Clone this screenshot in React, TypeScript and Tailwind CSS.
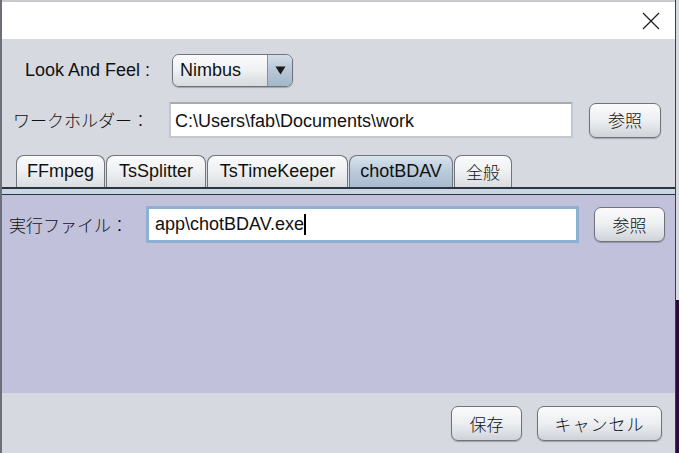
import { ReactNode } from 'react'

const latin = "font-['Liberation_Sans',Arial,sans-serif]"
const cjk = "font-['Noto_Sans_CJK_JP','Liberation_Sans',sans-serif] font-light"

const NimbusButton = ({ children, className }: { children: ReactNode; className: string }) => (
  <button
    className={`${className} ${cjk} flex items-center justify-center rounded-[7px] border border-[#6e737c] bg-gradient-to-b from-[#fbfbfc] via-[#eceef1] to-[#cfd3d9] text-[17px] text-[#111] shadow-[0_1px_1px_rgba(0,0,0,0.25)]`}
  >
    {children}
  </button>
)

const Tab = ({ label, width, selected, jp }: { label: string; width: string; selected?: boolean; jp?: boolean }) => (
  <div
    className={`${width} h-[32px] flex items-center justify-center rounded-t-[8px] border border-b-0 border-[#6f747d] text-[#111] ${
      jp ? `${cjk} text-[17px]` : `${latin} text-[18px]`
    } ${
      selected
        ? 'bg-gradient-to-b from-[#d9e4ee] via-[#b9cadb] to-[#a8bccf]'
        : 'bg-gradient-to-b from-[#fbfbfc] via-[#eef0f2] to-[#d9dce1]'
    }`}
  >
    {label}
  </div>
)

export default function App() {
  return (
    <div className="w-[679px] h-[453px] flex bg-[#d6d9df] overflow-hidden">
      <div className="w-[676px] h-[453px] flex flex-col border-l-2 border-r border-l-[#6b7078] border-r-[#3c3f46]">
        {/* title bar */}
        <div className="h-[39px] shrink-0 bg-white border-t-2 border-[#c9cacd] flex justify-end items-center pr-[15px]">
          <svg width="18" height="18" viewBox="0 0 18 18" className="mt-[1px]">
            <path d="M1 1 L17 17 M17 1 L1 17" stroke="#222" strokeWidth="1.3" fill="none" />
          </svg>
        </div>

        {/* top settings */}
        <div className="bg-[#d6d9df] shrink-0">
          <div className="flex items-center pt-[15px] pl-[23px]">
            <span className={`${latin} w-[147px] text-[18px] text-[#111]`}>Look And Feel :</span>
            <div className="w-[121px] h-[33px] flex rounded-[7px] border border-[#6e737c] overflow-hidden shadow-[0_1px_1px_rgba(0,0,0,0.25)]">
              <div className={`${latin} flex-1 flex items-center pl-[7px] text-[18px] text-[#111] bg-gradient-to-b from-[#fbfbfc] via-[#eef0f2] to-[#d6d9de]`}>
                Nimbus
              </div>
              <div className="w-[25px] flex items-center justify-center border-l border-[#8a9099] bg-gradient-to-b from-[#d3dee8] via-[#b6c7d7] to-[#a3b7ca]">
                <svg width="11" height="9" viewBox="0 0 11 9">
                  <path d="M0.5 0.5 L10.5 0.5 L5.5 8.5 Z" fill="#1a1a1a" />
                </svg>
              </div>
            </div>
          </div>

          <div className="flex items-center mt-[15px] pl-[11px]">
            <span className={`${cjk} w-[156px] text-[17px] text-[#111]`}>ワークホルダー：</span>
            <div className="w-[404px] h-[36px] flex items-center border-2 border-[#c4c7cc] border-t-[#a7abb1] bg-white pl-[4px] pt-[2px]">
              <span className={`${latin} text-[18px] text-[#111]`}>C:\Users\fab\Documents\work</span>
            </div>
            <NimbusButton className="ml-[16px] w-[72px] h-[35px]">参照</NimbusButton>
          </div>

          <div className="flex gap-[1px] mt-[17px] pl-[14px]">
            <Tab label="FFmpeg" width="w-[89px]" />
            <Tab label="TsSplitter" width="w-[100px]" />
            <Tab label="TsTimeKeeper" width="w-[141px]" />
            <Tab label="chotBDAV" width="w-[104px]" selected />
            <Tab label="全般" width="w-[58px]" jp />
          </div>
        </div>

        {/* tab separator */}
        <div className="h-[2px] bg-[#2f333b] shrink-0" />
        <div className="h-[5px] bg-[#c8d6e5] shrink-0" />
        <div className="h-[1px] bg-[#2f333b] shrink-0" />

        {/* tab content */}
        <div className="h-[198px] shrink-0 bg-[#c1c1dc] pt-[11px]">
          <div className="flex items-center pl-[7px]">
            <span className={`${cjk} w-[137px] text-[17px] text-[#111]`}>実行ファイル：</span>
            <div className="w-[433px] h-[37px] flex items-center border-[3px] border-[#8fb1d1] bg-white pl-[6px]">
              <span className={`${latin} text-[18px] text-[#111]`}>app\chotBDAV.exe</span>
              <span className="w-[2px] h-[21px] bg-black" />
            </div>
            <NimbusButton className="ml-[15px] w-[71px] h-[35px]">参照</NimbusButton>
          </div>
        </div>

        {/* bottom buttons */}
        <div className="flex-1 bg-[#d6d9df] flex justify-end gap-[15px] pt-[13px] pr-[13px]">
          <NimbusButton className="w-[71px] h-[35px]">保存</NimbusButton>
          <NimbusButton className="w-[125px] h-[35px] tracking-[1px]">キャンセル</NimbusButton>
        </div>
      </div>
      <div className="flex-1 flex flex-col">
        <div className="h-[300px] bg-[#d9dade]" />
        <div className="flex-1 bg-[#2b0b3a]" />
      </div>
    </div>
  )
}
